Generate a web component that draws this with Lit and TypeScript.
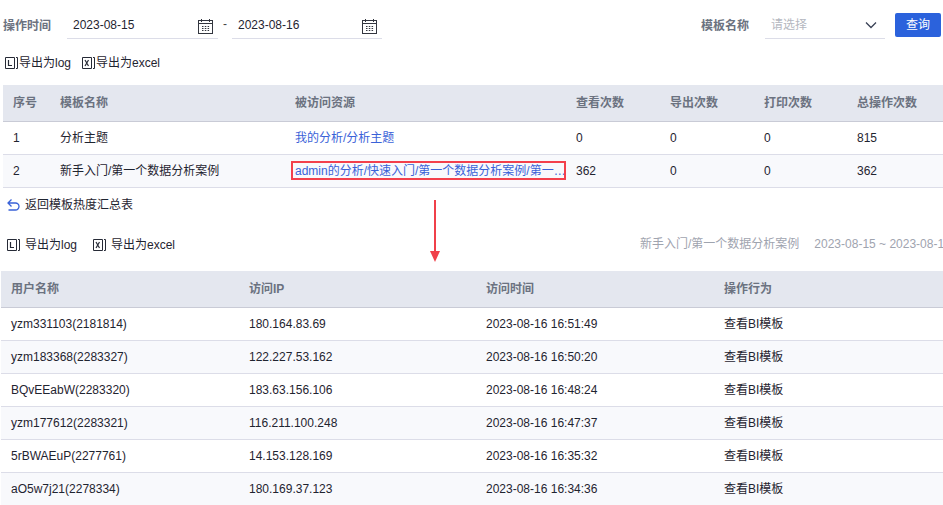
import { LitElement, html, css, svg } from "lit";
import { customElement } from "lit/decorators.js";

const calendar = html`<svg class="cal" width="15" height="15" viewBox="0 0 15 15" fill="none" stroke="#33363f" stroke-width="1">
  <rect x="0.5" y="1.5" width="14" height="13"/>
  <path d="M1 4.5h13M3.5 0v3M11.5 0v3"/>
  <path d="M4 7.5h1.5M6.8 7.5h1.5M9.6 7.5h1.5M4 9.5h1.5M6.8 9.5h1.5M9.6 9.5h1.5M4 11.5h1.5M6.8 11.5h1.5M9.6 11.5h1.5"/>
</svg>`;

const bracketIcon = (d: string) => html`<svg class="exp" width="14" height="14" viewBox="0 0 14 14" fill="none" stroke="#262a36" stroke-width="1">
  <path d="M9.5 1.5h-9v11h9z"/><path d="M11 1.5h1.5v11H11"/>
  ${svg`<path d=${d} stroke-width="1.2"/>`}
</svg>`;
const logIcon = bracketIcon("M3.5 4v5.5h3.5");
const xlsIcon = bracketIcon("M3 4l3.5 6M6.5 4L3 10");

const top = [
  ["1", "分析主题", "我的分析/分析主题", "0", "0", "0", "815"],
  ["2", "新手入门/第一个数据分析案例", "admin的分析/快速入门/第一个数据分析案例/第一个数据分析案例", "362", "0", "0", "362"],
];
const bottom = [
  ["yzm331103(2181814)", "180.164.83.69", "2023-08-16 16:51:49"],
  ["yzm183368(2283327)", "122.227.53.162", "2023-08-16 16:50:20"],
  ["BQvEEabW(2283320)", "183.63.156.106", "2023-08-16 16:48:24"],
  ["yzm177612(2283321)", "116.211.100.248", "2023-08-16 16:47:37"],
  ["5rBWAEuP(2277761)", "14.153.128.169", "2023-08-16 16:35:32"],
  ["aO5w7j21(2278334)", "180.169.37.123", "2023-08-16 16:34:36"],
];

@customElement("app-root")
export class AppRoot extends LitElement {
  static styles = css`
    :host {
      display: block;
      position: relative;
      width: 943px;
      height: 505px;
      overflow: hidden;
      background: #fff;
      font-family: "Liberation Sans", "Noto Sans CJK SC", sans-serif;
      font-size: 12px;
      color: #1f2430;
    }
    .filters {
      display: flex;
      align-items: flex-end;
      height: 39px;
      padding: 0 2px 0 3px;
    }
    .label { color: #6b7280; font-weight: 700; line-height: 16px; padding-bottom: 5px; }
    .label.first { width: 64px; }
    .field {
      display: flex;
      align-items: center;
      justify-content: space-between;
      box-sizing: border-box;
      height: 24px;
      border-bottom: 1px solid #dcdde8;
      padding: 0 5px 4px 6px;
      line-height: 16px;
    }
    .field.d1 { width: 151px; }
    .field.d2 { width: 150px; }
    .cal { display: block; flex: none; margin-top: 3px; }
    .dash { width: 14px; text-align: center; line-height: 16px; padding-bottom: 7px; color: #444; }
    .spacer { flex: 1; }
    .field.sel { width: 120px; margin-left: 16px; color: #b4b7c0; padding: 0 8px 3px 6px; }
    button {
      all: unset;
      box-sizing: border-box;
      width: 46px;
      height: 24px;
      margin: 0 0 2px 10px;
      background: #2b62dc;
      border-radius: 2px;
      color: #fff;
      text-align: center;
      line-height: 24px;
      font-size: 12px;
    }
    .exports { display: flex; align-items: center; height: 16px; }
    .exports.a { margin: 16px 0 0 5px; gap: 11px; }
    .exports.a .item { gap: 0; }
    .item { display: flex; align-items: center; line-height: 16px; }
    .exp { display: block; flex: none; }
    .grid { display: grid; }
    .t1 { margin: 14px 0 0 3px; grid-template-columns: 47px 235px 281px 94px 94px 93px 1fr; }
    .t2 { margin: 0 0 0 1px; grid-template-columns: 238px 237px 238px 1fr; }
    .cell {
      box-sizing: border-box;
      height: 33px;
      line-height: 32px;
      padding-left: 10px;
      border-bottom: 1px solid #dcdde8;
      white-space: nowrap;
      overflow: hidden;
    }
    .head {
      height: 37px;
      line-height: 36px;
      background: #e4e7ef;
      color: #6b7280;
      font-weight: 700;
      border-bottom: 1px solid #c9cbd6;
    }
    .alt { background: #f8f9fc; }
    .link { color: #3a62d8; text-overflow: ellipsis; }
    .back { display: flex; align-items: center; gap: 5px; height: 16px; margin: 9px 0 0 7px; line-height: 16px; }
    .bar {
      display: flex;
      align-items: center;
      height: 16px;
      margin: 24px 0 0 7px;
      white-space: nowrap;
    }
    .bar .exports { gap: 16px; }
    .bar .item { gap: 4px; }
    .crumb { position: absolute; left: 640px; top: 236px; color: #9fa4af; line-height: 16px; white-space: nowrap; }
    .crumb span + span { margin-left: 15px; }
    .t2wrap { margin-top: 18px; }
    .mark {
      position: absolute;
      left: 291px;
      top: 161px;
      width: 275px;
      height: 19px;
      box-sizing: border-box;
      border: 2px solid #f3404c;
      pointer-events: none;
    }
    .arrow { position: absolute; left: 429px; top: 200px; display: block; }
  `;

  render() {
    return html`
      <div class="filters">
        <span class="label first">操作时间</span>
        <div class="field d1"><span>2023-08-15</span>${calendar}</div>
        <span class="dash">-</span>
        <div class="field d2"><span>2023-08-16</span>${calendar}</div>
        <span class="spacer"></span>
        <span class="label">模板名称</span>
        <div class="field sel"><span>请选择</span>
          <svg width="12" height="8" viewBox="0 0 12 8" fill="none" stroke="#3a4256" stroke-width="1.3"><path d="M1 1.5l5 5 5-5"/></svg>
        </div>
        <button>查询</button>
      </div>

      <div class="exports a">
        <span class="item">${logIcon}导出为log</span>
        <span class="item">${xlsIcon}导出为excel</span>
      </div>

      <div class="grid t1">
        ${["序号", "模板名称", "被访问资源", "查看次数", "导出次数", "打印次数", "总操作次数"].map((h) => html`<div class="cell head">${h}</div>`)}
        ${top.map((r, i) => r.map((c, j) => html`<div class="cell ${i % 2 ? "alt" : ""} ${j === 2 ? "link" : ""}">${c}</div>`))}
      </div>

      <div class="back">
        <svg width="13" height="12" viewBox="0 0 13 12" fill="none" stroke="#3a62d8" stroke-width="1.3"><path d="M4.5 0.5L1 4l3.5 3.5M1 4h7.5a3.3 3.3 0 0 1 0 7H1.5"/></svg>
        <span>返回模板热度汇总表</span>
      </div>

      <div class="bar">
        <div class="exports">
          <span class="item">${logIcon}导出为log</span>
          <span class="item">${xlsIcon}导出为excel</span>
        </div>
      </div>
      <div class="crumb"><span>新手入门/第一个数据分析案例</span><span>2023-08-15 ~ 2023-08-16</span></div>

      <div class="t2wrap grid t2">
        ${["用户名称", "访问IP", "访问时间", "操作行为"].map((h) => html`<div class="cell head">${h}</div>`)}
        ${bottom.map((r, i) => [...r, "查看BI模板"].map((c) => html`<div class="cell ${i % 2 ? "alt" : ""}">${c}</div>`))}
      </div>

      <div class="mark"></div>
      <svg class="arrow" width="12" height="62" viewBox="0 0 12 62">
        <path d="M6 0v52" stroke="#f0404a" stroke-width="2" fill="none"/>
        <path d="M1 51h10l-5 11z" fill="#f0404a"/>
      </svg>
    `;
  }
}
